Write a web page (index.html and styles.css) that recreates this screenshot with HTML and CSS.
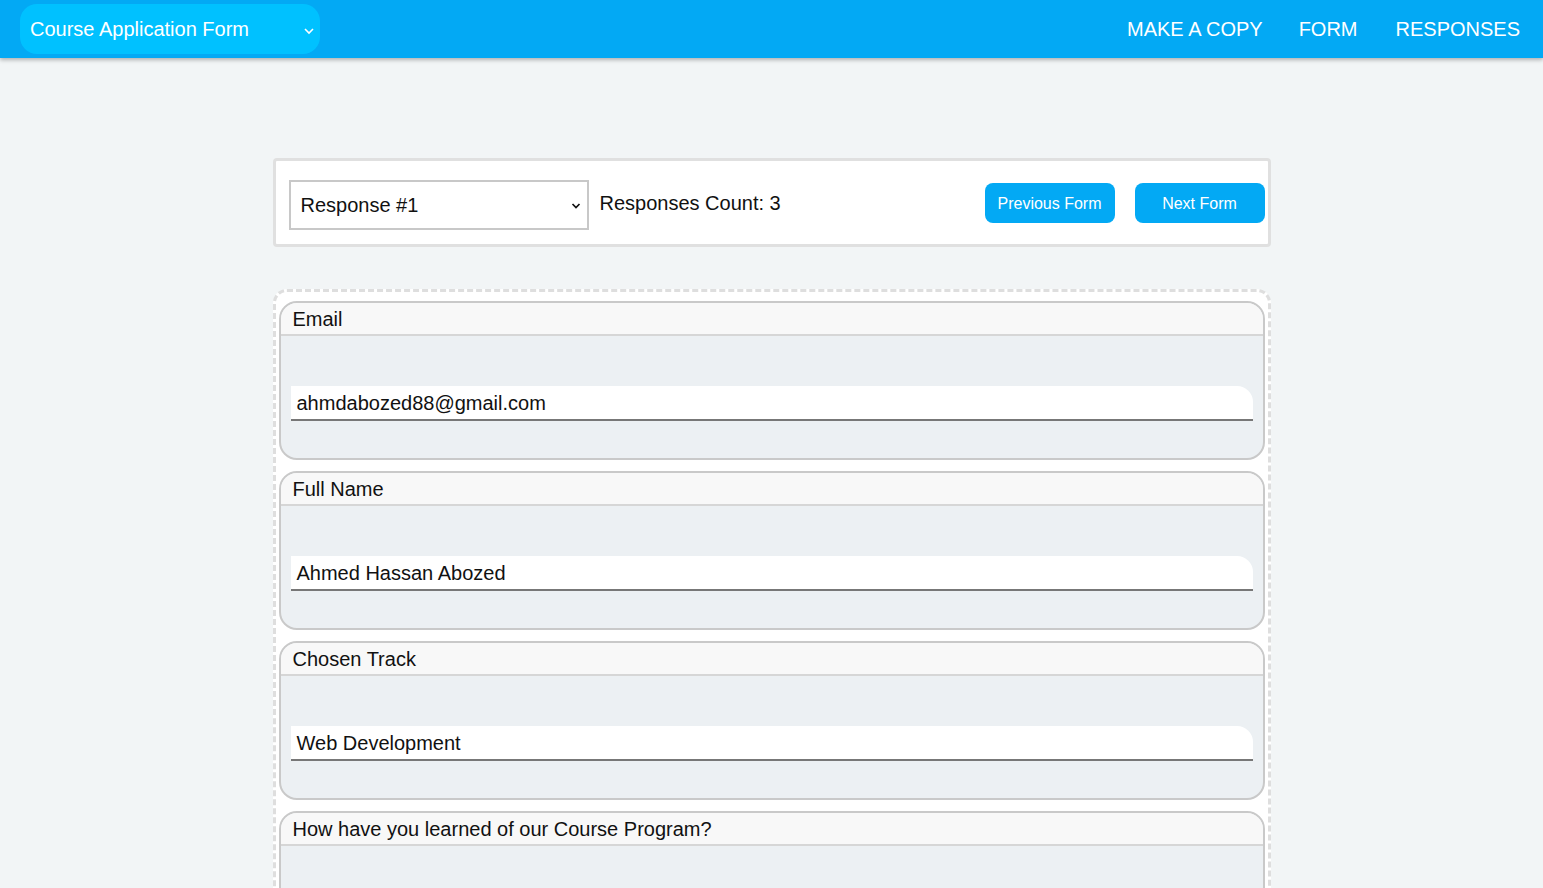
FILE: index.html
```html
<!DOCTYPE html>
<html lang="en">
<head>
<meta charset="utf-8">
<title>Course Application Form - Responses</title>
<link rel="stylesheet" href="styles.css">
</head>
<body>
<header class="topbar">
  <div class="form-picker">
    <span class="form-picker-label">Course Application Form</span>
    <svg class="chev" width="12" height="8" viewBox="0 0 12 8"><path d="M2 2l4 4 4-4" fill="none" stroke="#fff" stroke-width="1.6"/></svg>
  </div>
  <nav class="links">
    <a class="link" href="#">MAKE A COPY</a>
    <a class="link" href="#">FORM</a>
    <a class="link" href="#">RESPONSES</a>
  </nav>
</header>

<main class="page">
  <section class="toolbar">
    <div class="resp-select">
      <span>Response #1</span>
      <svg class="chev-dark" width="12" height="8" viewBox="0 0 12 8"><path d="M2.5 2l3.5 3.5 3.5-3.5" fill="none" stroke="#111" stroke-width="1.7"/></svg>
    </div>
    <span class="count">Responses Count: 3</span>
    <div class="btns">
      <button class="btn">Previous Form</button>
      <button class="btn">Next Form</button>
    </div>
  </section>

  <section class="answers">
    <div class="card">
      <div class="card-head">Email</div>
      <div class="card-body"><div class="answer">ahmdabozed88@gmail.com</div></div>
    </div>
    <div class="card">
      <div class="card-head">Full Name</div>
      <div class="card-body"><div class="answer">Ahmed Hassan Abozed</div></div>
    </div>
    <div class="card">
      <div class="card-head">Chosen Track</div>
      <div class="card-body"><div class="answer">Web Development</div></div>
    </div>
    <div class="card">
      <div class="card-head">How have you learned of our Course Program?</div>
      <div class="card-body"><div class="answer">&nbsp;</div></div>
    </div>
  </section>
</main>
</body>
</html>
```

FILE: styles.css
```css
* { box-sizing: border-box; }
html, body { margin: 0; padding: 0; }
body {
  background: #f2f5f6;
  font-family: "Liberation Sans", Arial, sans-serif;
  color: #111;
}

.topbar {
  height: 58px;
  background: #03a9f4;
  display: flex;
  align-items: flex-start;
  justify-content: space-between;
  padding: 4px 23px 0 20px;
  box-shadow: 0 2px 4px rgba(0, 0, 0, 0.28);
  position: relative;
  z-index: 1;
}
.form-picker {
  width: 300px;
  height: 50px;
  background: #00c1ff;
  border-radius: 17px;
  display: flex;
  align-items: center;
  justify-content: space-between;
  padding: 0 5px 0 10px;
  color: #fff;
  font-size: 20px;
}
.form-picker .chev { margin-top: 3px; }
.links {
  display: flex;
  gap: 38px;
  height: 50px;
  align-items: center;
}
.link {
  color: #fff;
  text-decoration: none;
  font-size: 20px;
}
.link:first-child { margin-right: -2px; }

.page {
  width: 998px;
  margin: 100px auto 0;
}

.toolbar {
  background: #fff;
  border: 3px solid #e0e0e0;
  border-radius: 4px;
  height: 89px;
  display: flex;
  align-items: center;
  padding: 0 3px 0 13px;
}
.resp-select {
  width: 300px;
  height: 50px;
  border: 2px solid #c8c8c8;
  background: #fff;
  display: flex;
  align-items: center;
  justify-content: space-between;
  padding: 0 5px 0 10px;
  font-size: 20px;
  margin-top: 4px;
}
.resp-select span { margin-top: 1px; }
.chev-dark { margin-top: 2px; }
.count {
  font-size: 20px;
  margin-left: 11px;
  padding-top: 1px;
}
.btns {
  margin-left: auto;
  display: flex;
  gap: 20px;
}
.btn {
  width: 130px;
  height: 40px;
  border: none;
  border-radius: 8px;
  background: #03a9f4;
  color: #fff;
  font-family: "Liberation Sans", Arial, sans-serif;
  font-size: 16px;
  padding: 2px 0 0;
}

.answers {
  margin-top: 42px;
  background: #fff;
  border: 3px dashed #dedede;
  border-radius: 14px;
  padding: 9px 3px 40px 3px;
  display: flex;
  flex-direction: column;
  gap: 11px;
}
.card {
  height: 159px;
  border: 2px solid #c9c9c9;
  border-radius: 18px;
  overflow: hidden;
  display: flex;
  flex-direction: column;
  background: #ecf0f3;
}
.card-head {
  height: 33px;
  background: #f8f8f8;
  border-bottom: 2px solid #d6d6d6;
  padding: 1px 12px 0;
  font-size: 20px;
  line-height: 30px;
}
.card-body {
  flex: 1;
  padding: 50px 10px 0 10px;
}
.answer {
  height: 35px;
  background: #fff;
  border-bottom: 2px solid #777;
  border-top-right-radius: 16px;
  padding: 0 6px;
  font-size: 20px;
  line-height: 34px;
}
```
